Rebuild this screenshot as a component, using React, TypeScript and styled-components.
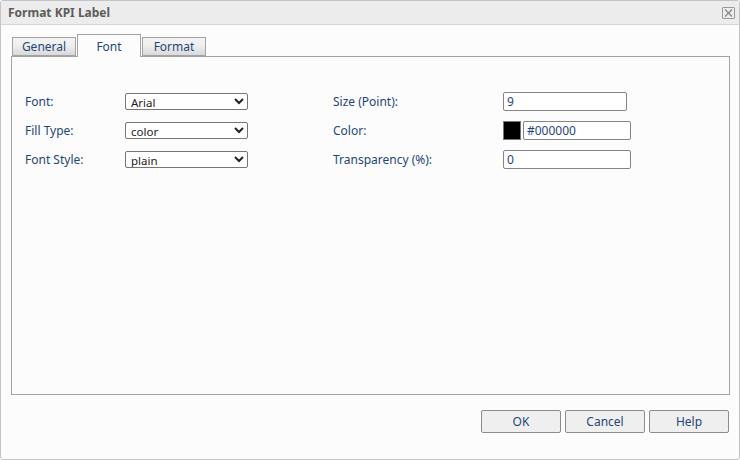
import styled, { createGlobalStyle } from "styled-components";

const GlobalStyle = createGlobalStyle`
  html, body {
    margin: 0;
    padding: 0;
    background: #ffffff;
  }
  * {
    box-sizing: border-box;
  }
`;

const FONT = `"Noto Sans", "Open Sans", "DejaVu Sans", sans-serif`;

const leftRows = [
  { label: "Font:", value: "Arial", options: ["Arial", "Verdana", "Tahoma"] },
  { label: "Fill Type:", value: "color", options: ["color", "gradient"] },
  { label: "Font Style:", value: "plain", options: ["plain", "bold", "italic"] },
];

const App = () => {
  return (
    <>
      <GlobalStyle />
      <Dialog>
        <TitleBar>
          <Title>Format KPI Label</Title>
          <CloseButton aria-label="close">
            <svg width="9" height="8" viewBox="0 0 9 8">
              <path d="M1 0.5 L8 7.5 M8 0.5 L1 7.5" stroke="#8a8a8a" strokeWidth="1.4" />
            </svg>
          </CloseButton>
        </TitleBar>
        <Body>
          <Tabs>
            <Tab>General</Tab>
            <Tab $active>Font</Tab>
            <Tab>Format</Tab>
          </Tabs>
          <Panel>
            <FormGrid>
              <Column>
                {leftRows.map((row) => (
                  <Row key={row.label} $labelWidth={100}>
                    <Label>{row.label}</Label>
                    <Select defaultValue={row.value}>
                      {row.options.map((o) => (
                        <option key={o}>{o}</option>
                      ))}
                    </Select>
                  </Row>
                ))}
              </Column>
              <Column>
                <Row $labelWidth={170}>
                  <Label>Size (Point):</Label>
                  <TextInput $width={124} defaultValue="9" />
                </Row>
                <Row $labelWidth={170}>
                  <Label>Color:</Label>
                  <ColorField>
                    <Swatch $color="#000000" />
                    <TextInput $width={108} defaultValue="#000000" />
                  </ColorField>
                </Row>
                <Row $labelWidth={170}>
                  <Label>Transparency (%):</Label>
                  <TextInput $width={128} defaultValue="0" />
                </Row>
              </Column>
            </FormGrid>
          </Panel>
        </Body>
        <Footer>
          <Button>OK</Button>
          <Button>Cancel</Button>
          <Button>Help</Button>
        </Footer>
      </Dialog>
    </>
  );
};

const Dialog = styled.div`
  width: 740px;
  height: 460px;
  border: 1px solid #c4c4c4;
  border-radius: 3px;
  background: #fbfcfb;
  display: flex;
  flex-direction: column;
  font-family: ${FONT};
  font-size: 12px;
  overflow: hidden;
`;

const TitleBar = styled.div`
  height: 24px;
  flex: none;
  background: #ececec;
  border-bottom: 1px solid #d6d6d6;
  display: flex;
  align-items: center;
  justify-content: space-between;
  padding: 0 4px 0 7px;
`;

const Title = styled.span`
  font-weight: bold;
  font-size: 12px;
  color: #5c5c5c;
`;

const CloseButton = styled.span`
  width: 13px;
  height: 12px;
  border: 1px solid #9a9a9a;
  border-radius: 1px;
  display: flex;
  align-items: center;
  justify-content: center;
`;

const Body = styled.div`
  padding: 9px 9px 0 10px;
`;

const Tabs = styled.div`
  display: flex;
  align-items: flex-end;
  gap: 1px;
  padding-left: 1px;
  height: 22px;
  position: relative;
  z-index: 1;
`;

const Tab = styled.div<{ $active?: boolean }>`
  width: 64px;
  height: ${(p) => (p.$active ? "23px" : "19px")};
  margin-bottom: ${(p) => (p.$active ? "-1px" : "0")};
  border: 1px solid #a3a3a3;
  border-bottom: ${(p) => (p.$active ? "none" : "1px solid #a3a3a3")};
  background: ${(p) =>
    p.$active ? "#fbfcfb" : "linear-gradient(#f3f3f3, #f0f0f0 40%, #d9d9d9)"};
  color: #1f4777;
  font-size: 12px;
  display: flex;
  align-items: center;
  justify-content: center;
  padding-top: ${(p) => (p.$active ? "1px" : "0")};
`;

const Panel = styled.div`
  height: 339px;
  border: 1px solid #a3a3a3;
  background: #fbfcfb;
  padding: 35px 0 0 13px;
`;

const FormGrid = styled.div`
  display: flex;
  gap: 85px;
`;

const Column = styled.div`
  display: grid;
  grid-auto-rows: 29px;
`;

const Row = styled.div<{ $labelWidth: number }>`
  display: grid;
  grid-template-columns: ${(p) => p.$labelWidth}px auto;
  align-items: start;
`;

const Label = styled.span`
  color: #1f4777;
  font-size: 12px;
  line-height: 19px;
`;

const Select = styled.select`
  width: 123px;
  height: 17px;
  margin-top: 1px;
  font-family: ${FONT};
  font-size: 11.5px;
  line-height: 15px;
  color: #222;
  border: 1px solid #767676;
  border-radius: 2px;
  background: #ffffff;
  padding: 0 1px;
`;

const TextInput = styled.input<{ $width: number }>`
  width: ${(p) => p.$width}px;
  height: 19px;
  font-family: ${FONT};
  font-size: 12px;
  color: #1f4777;
  border: 1px solid #858585;
  border-radius: 2px;
  background: #ffffff;
  padding: 0 3px;
  outline: none;
`;

const ColorField = styled.div`
  display: flex;
  gap: 2px;
`;

const Swatch = styled.div<{ $color: string }>`
  width: 18px;
  height: 19px;
  background: ${(p) => p.$color};
  border: 1px solid #767676;
`;

const Footer = styled.div`
  display: flex;
  justify-content: flex-end;
  gap: 4px;
  padding: 15px 10px 0 0;
`;

const Button = styled.button`
  width: 80px;
  height: 23px;
  background: #efefef;
  border: 1px solid #8c8c8c;
  border-radius: 2px;
  color: #1f4777;
  font-family: ${FONT};
  font-size: 12px;
  padding: 0;
`;

export default App;
